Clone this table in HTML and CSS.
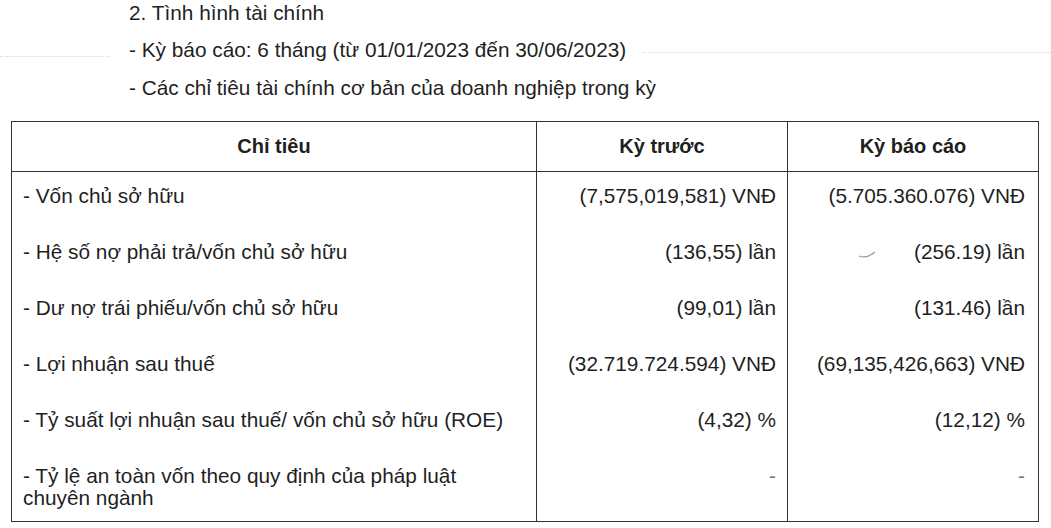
FILE: index.html
```html
<!DOCTYPE html>
<html lang="vi">
<head>
<meta charset="utf-8">
<title>Tình hình tài chính</title>
<link rel="stylesheet" href="styles.css">
</head>
<body>
<div class="page">
  <p class="line title">2. Tình hình tài chính</p>
  <p class="line period"><span class="noise noise-left"></span><span class="period-text">- Kỳ báo cáo: 6 tháng (từ 01/01/2023 đến 30/06/2023)</span><span class="noise noise-right"></span></p>
  <p class="line intro">- Các chỉ tiêu tài chính cơ bản của doanh nghiệp trong kỳ</p>
  <table class="fin">
    <colgroup>
      <col class="c-label">
      <col class="c-val">
      <col class="c-val">
    </colgroup>
    <thead>
      <tr><th>Chỉ tiêu</th><th>Kỳ trước</th><th>Kỳ báo cáo</th></tr>
    </thead>
    <tbody>
      <tr><td class="label">- Vốn chủ sở hữu</td><td class="val prev">(7,575,019,581) VNĐ</td><td class="val cur">(5.705.360.076) VNĐ</td></tr>
      <tr><td class="label">- Hệ số nợ phải trả/vốn chủ sở hữu</td><td class="val prev">(136,55) lần</td><td class="val cur speck-cell"><svg class="speck" width="20" height="9" viewBox="0 0 20 9"><path d="M1 6 Q9 9 17 2" fill="none" stroke="#9a9a9a" stroke-width="1.2"/></svg>(256.19) lần</td></tr>
      <tr><td class="label">- Dư nợ trái phiếu/vốn chủ sở hữu</td><td class="val prev">(99,01) lần</td><td class="val cur">(131.46) lần</td></tr>
      <tr><td class="label">- Lợi nhuận sau thuế</td><td class="val prev">(32.719.724.594) VNĐ</td><td class="val cur">(69,135,426,663) VNĐ</td></tr>
      <tr><td class="label">- Tỷ suất lợi nhuận sau thuế/ vốn chủ sở hữu (ROE)</td><td class="val prev">(4,32) %</td><td class="val cur">(12,12) %</td></tr>
      <tr class="last"><td class="label">- Tỷ lệ an toàn vốn theo quy định của pháp luật<br>chuyên ngành</td><td class="val prev dash">-</td><td class="val cur dash">-</td></tr>
    </tbody>
  </table>
</div>
</body>
</html>
```
FILE: styles.css
```css
html, body {
  margin: 0;
  background: #ffffff;
}
body {
  font-family: "Liberation Sans", Arial, sans-serif;
  color: #1f1f1f;
}
.page {
  padding: 1px 0 0 11px;
}
.line {
  margin: 0;
  font-size: 20.8px;
  line-height: 24px;
  padding-left: 118px;
  white-space: nowrap;
}
.period {
  margin-top: 13px;
  margin-left: -11px;
  padding-left: 0;
  display: flex;
  align-items: center;
}
.noise {
  display: block;
  height: 0;
  border-top: 1px dotted #d9d9d9;
}
.noise-left {
  width: 110px;
  margin-right: 19px;
  margin-top: 12px;
}
.noise-right {
  flex: 1;
  margin-left: 16px;
  margin-top: 4px;
}
.intro {
  margin-top: 14px;
}
.fin {
  margin-top: 21px;
  border-collapse: collapse;
  width: 1027px;
  table-layout: fixed;
  font-size: 20.8px;
}
.c-label { width: 525px; }
.c-val { width: 251px; }
.fin th {
  height: 49px;
  padding: 0;
  border: 1px solid #333333;
  font-weight: 700;
  font-size: 20px;
  text-align: center;
  vertical-align: middle;
  color: #1f1f1f;
}
.fin td {
  border-left: 1px solid #333333;
  border-right: 1px solid #333333;
  padding: 13px 12px 21px 12px;
  line-height: 22px;
  vertical-align: top;
  white-space: nowrap;
}
.fin td.label {
  padding-left: 11px;
}
.fin td.val {
  text-align: right;
}
.fin td.prev {
  padding-right: 11px;
}
.fin td.cur {
  padding-right: 13px;
}
.fin td.dash {
  color: #777777;
}
.fin tr.last td {
  padding-bottom: 12px;
  border-bottom: 1px solid #333333;
}
.speck-cell {
  position: relative;
}
.speck {
  position: absolute;
  left: 70px;
  top: 22px;
}
```
